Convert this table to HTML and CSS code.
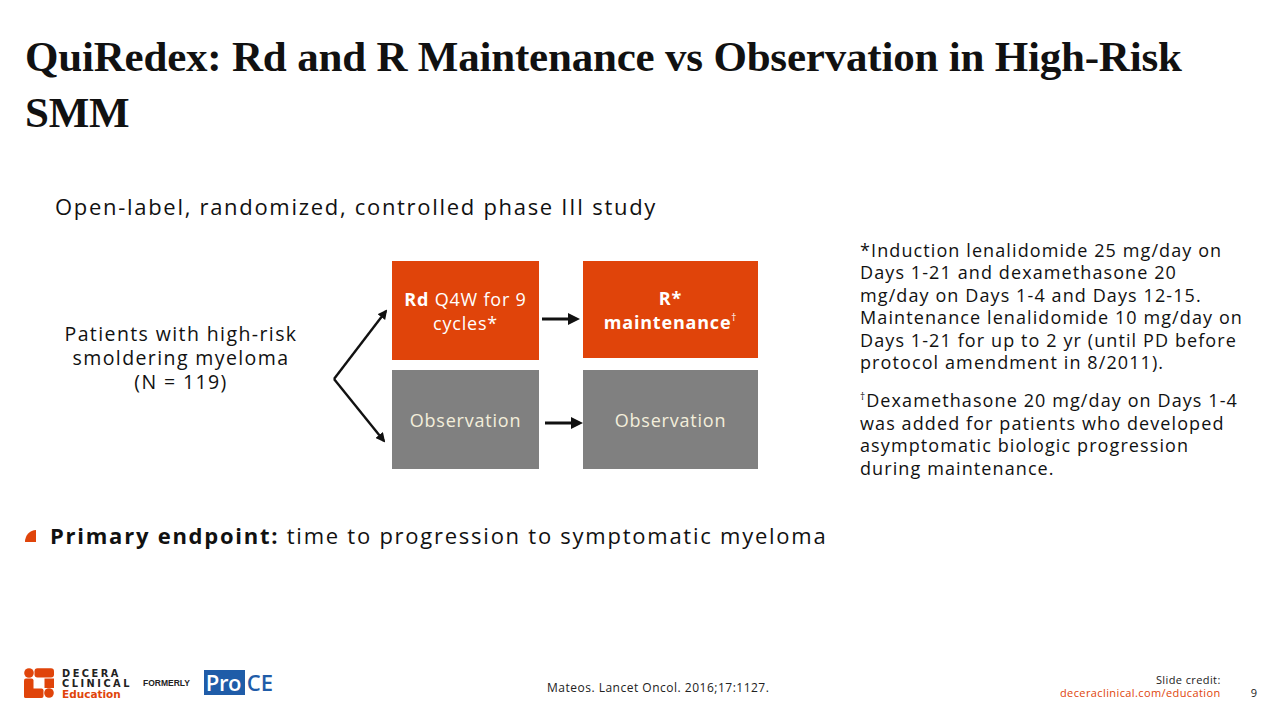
FILE: index.html
```html
<!DOCTYPE html>
<html lang="en">
<head>
<meta charset="utf-8">
<title>QuiRedex</title>
<link rel="stylesheet" href="styles.css">
</head>
<body>
<div class="slide">
  <h1 class="title">QuiRedex: Rd and R Maintenance vs Observation in High-Risk SMM</h1>

  <div class="main">
    <div class="left">
      <p class="subtitle">Open-label, randomized, controlled phase III study</p>
      <div class="diagram">
        <div class="patients">Patients with high-risk<br>smoldering myeloma<br>(N = 119)</div>
        <svg class="branch" viewBox="0 0 62 208" width="62" height="208">
          <defs>
            <marker id="ah" viewBox="0 0 10 10" refX="8" refY="5" markerWidth="4" markerHeight="4" orient="auto">
              <path d="M0 0 L10 5 L0 10 z" fill="#111"/>
            </marker>
          </defs>
          <line x1="4" y1="118" x2="56" y2="50" stroke="#111" stroke-width="2.4" marker-end="url(#ah)"/>
          <line x1="4" y1="118" x2="54" y2="180" stroke="#111" stroke-width="2.4" marker-end="url(#ah)"/>
        </svg>
        <div class="box orange b1"><span><b>Rd</b> Q4W for 9<br>cycles*</span></div>
        <svg class="harrow a1" viewBox="0 0 44 20" width="44" height="20">
          <rect x="3" y="8.5" width="28" height="3" fill="#111"/>
          <path d="M29 4 L41 10 L29 16 z" fill="#111"/>
        </svg>
        <div class="box orange b2"><span class="strong">R*<br>maintenance<sup>†</sup></span></div>
        <div class="box gray b3"><span>Observation</span></div>
        <svg class="harrow a2" viewBox="0 0 44 20" width="44" height="20">
          <rect x="6" y="8.5" width="28" height="3" fill="#111"/>
          <path d="M32 4 L44 10 L32 16 z" fill="#111"/>
        </svg>
        <div class="box gray b4"><span>Observation</span></div>
      </div>
    </div>

    <div class="notes">
      <p>*Induction lenalidomide 25 mg/day on<br>Days 1-21 and dexamethasone 20<br>mg/day on Days 1-4 and Days 12-15.<br>Maintenance lenalidomide 10 mg/day on<br>Days 1-21 for up to 2 yr (until PD before<br>protocol amendment in 8/2011).</p>
      <p><sup>†</sup>Dexamethasone 20 mg/day on Days 1-4<br>was added for patients who developed<br>asymptomatic biologic progression<br>during maintenance.</p>
    </div>
  </div>

  <div class="endpoint">
    <span class="bullet"></span>
    <p><b>Primary endpoint:</b> time to progression to symptomatic myeloma</p>
  </div>

  <footer class="footer">
    <div class="brand">
      <svg class="logo-mark" viewBox="0 0 30 30" width="30" height="30">
        <circle cx="5" cy="5" r="4.8" fill="#e0440a"/>
        <rect x="10.5" y="0.2" width="19.5" height="9.3" rx="3" fill="#e0440a"/>
        <rect x="20.5" y="10.5" width="9.5" height="9.5" fill="#e0440a"/>
        <rect x="0" y="10.5" width="9.5" height="19.5" rx="2" fill="#e0440a"/>
        <rect x="0" y="20.5" width="19.5" height="9.5" rx="2" fill="#e0440a"/>
        <circle cx="25" cy="25" r="4.8" fill="#e0440a"/>
      </svg>
      <div class="wordmark">
        <span class="wm1">DECERA</span>
        <span class="wm1">CLINICAL</span>
        <span class="wm2">Education</span>
      </div>
      <span class="formerly">FORMERLY</span>
      <div class="proce"><span class="pro">Pro</span><span class="ce">CE</span></div>
    </div>
    <p class="cite">Mateos. Lancet Oncol. 2016;17:1127.</p>
    <div class="credit">
      <span class="credit-label">Slide credit:</span>
      <span class="credit-url">deceraclinical.com/education</span>
    </div>
    <span class="page">9</span>
  </footer>
</div>
</body>
</html>
```

FILE: styles.css
```css
* { box-sizing: border-box; }

html, body {
  margin: 0;
  padding: 0;
  background: #ffffff;
}

body {
  font-family: "Open Sans", "Noto Sans", "DejaVu Sans", sans-serif;
  color: #111111;
}

.slide {
  width: 1280px;
  height: 720px;
  overflow: hidden;
  display: flex;
  flex-direction: column;
  position: relative;
}

.title {
  margin: 0;
  padding: 29px 0 0 25px;
  width: 1220px;
  font-family: "Liberation Serif", "Times New Roman", serif;
  font-weight: bold;
  font-size: 43px;
  line-height: 56px;
  color: #111111;
  letter-spacing: -0.2px;
}

.main {
  display: flex;
  margin-top: 51px;
}

.left {
  width: 828px;
  flex: none;
}

.subtitle {
  margin: 0 0 0 55px;
  font-size: 22px;
  line-height: 28px;
  letter-spacing: 1.7px;
  color: #111;
}

.diagram {
  margin: 41px 0 0 32px;
  display: grid;
  grid-template-columns: 298px 62px 147px 44px 175px;
  grid-template-rows: 99px 99px;
  row-gap: 10px;
}

.patients {
  grid-column: 1;
  grid-row: 1 / span 2;
  align-self: center;
  text-align: center;
  font-size: 19.5px;
  line-height: 24px;
  letter-spacing: 1.4px;
  padding-bottom: 14px;
  color: #111;
}

.branch {
  grid-column: 2;
  grid-row: 1 / span 2;
  display: block;
  overflow: visible;
}

.box {
  display: flex;
  align-items: center;
  justify-content: center;
  text-align: center;
  font-size: 18px;
  line-height: 24px;
  letter-spacing: 0.8px;
}

.box.orange {
  background: #e0440a;
  color: #ffffff;
}

.box.gray {
  background: #808080;
  color: #f3eedb;
}

.box b, .box .strong {
  font-weight: 700;
}

.box sup {
  font-size: 10px;
  font-weight: 400;
  vertical-align: top;
  line-height: 14px;
}

.b1 { grid-column: 3; grid-row: 1; }
.b2 { grid-column: 5; grid-row: 1; height: 97px; }
.b3 { grid-column: 3; grid-row: 2; }
.b4 { grid-column: 5; grid-row: 2; }

.harrow {
  display: block;
  grid-column: 4;
  align-self: start;
}

.a1 { grid-row: 1; margin-top: 48px; }
.a2 { grid-row: 2; margin-top: 43px; }

.notes {
  margin: 47px 0 0 32px;
  width: 420px;
  font-size: 18px;
  line-height: 22.4px;
  letter-spacing: 1.1px;
  color: #111;
}

.notes p {
  margin: 0 0 16px 0;
  white-space: nowrap;
}

.notes sup {
  font-size: 10px;
  vertical-align: top;
  line-height: 14px;
}

.endpoint {
  display: flex;
  align-items: center;
  margin-top: 26px;
  padding-left: 25px;
}

.bullet {
  width: 11px;
  height: 12px;
  background: #e0440a;
  border-top-left-radius: 100% 100%;
  margin-right: 14px;
  margin-top: 2px;
}

.endpoint p {
  margin: 0;
  font-size: 22px;
  line-height: 28px;
  letter-spacing: 1.75px;
  color: #111;
}

.endpoint b {
  font-weight: 700;
}

.footer {
  margin-top: auto;
  height: 56px;
  display: flex;
  align-items: flex-start;
  padding: 0 0 0 24px;
  position: relative;
}

.brand {
  display: flex;
  align-items: center;
  width: 254px;
  padding-top: 2px;
}

.logo-mark {
  display: block;
  flex: none;
}

.wordmark {
  display: flex;
  flex-direction: column;
  margin: 3px 0 0 8px;
  font-family: "DejaVu Sans", "Noto Sans", sans-serif;
  line-height: 10px;
}

.wm1 {
  font-size: 9.8px;
  font-weight: 700;
  letter-spacing: 2.5px;
  color: #222;
}

.wm2 {
  font-size: 10.5px;
  font-weight: 700;
  color: #e0440a;
  letter-spacing: 0;
}

.formerly {
  margin-left: 11px;
  font-family: "Liberation Sans", Arial, sans-serif;
  font-size: 8.5px;
  font-weight: 700;
  color: #222;
}

.proce {
  display: flex;
  align-items: center;
  margin-left: 14px;
  font-family: "Open Sans", "Liberation Sans", sans-serif;
  font-size: 22px;
  line-height: 25px;
  font-weight: 600;
}

.pro {
  background: #1f5ca8;
  color: #ffffff;
  padding: 0 0 0 2px;
  height: 25px;
  width: 41px;
  letter-spacing: -0.5px;
}

.ce {
  color: #1f5ca8;
  padding-left: 2px;
}

.cite {
  margin: 17px 0 0 269px;
  font-size: 12px;
  line-height: 14px;
  letter-spacing: 0.5px;
  color: #222;
}

.credit {
  display: flex;
  flex-direction: column;
  align-items: flex-end;
  margin-left: auto;
  margin-top: 9px;
  font-size: 11px;
  line-height: 13px;
  letter-spacing: 0.4px;
}

.credit-label { color: #222; }
.credit-url { color: #e0440a; }

.page {
  margin: 22px 23px 0 30px;
  font-size: 11px;
  line-height: 13px;
  color: #222;
}
```
